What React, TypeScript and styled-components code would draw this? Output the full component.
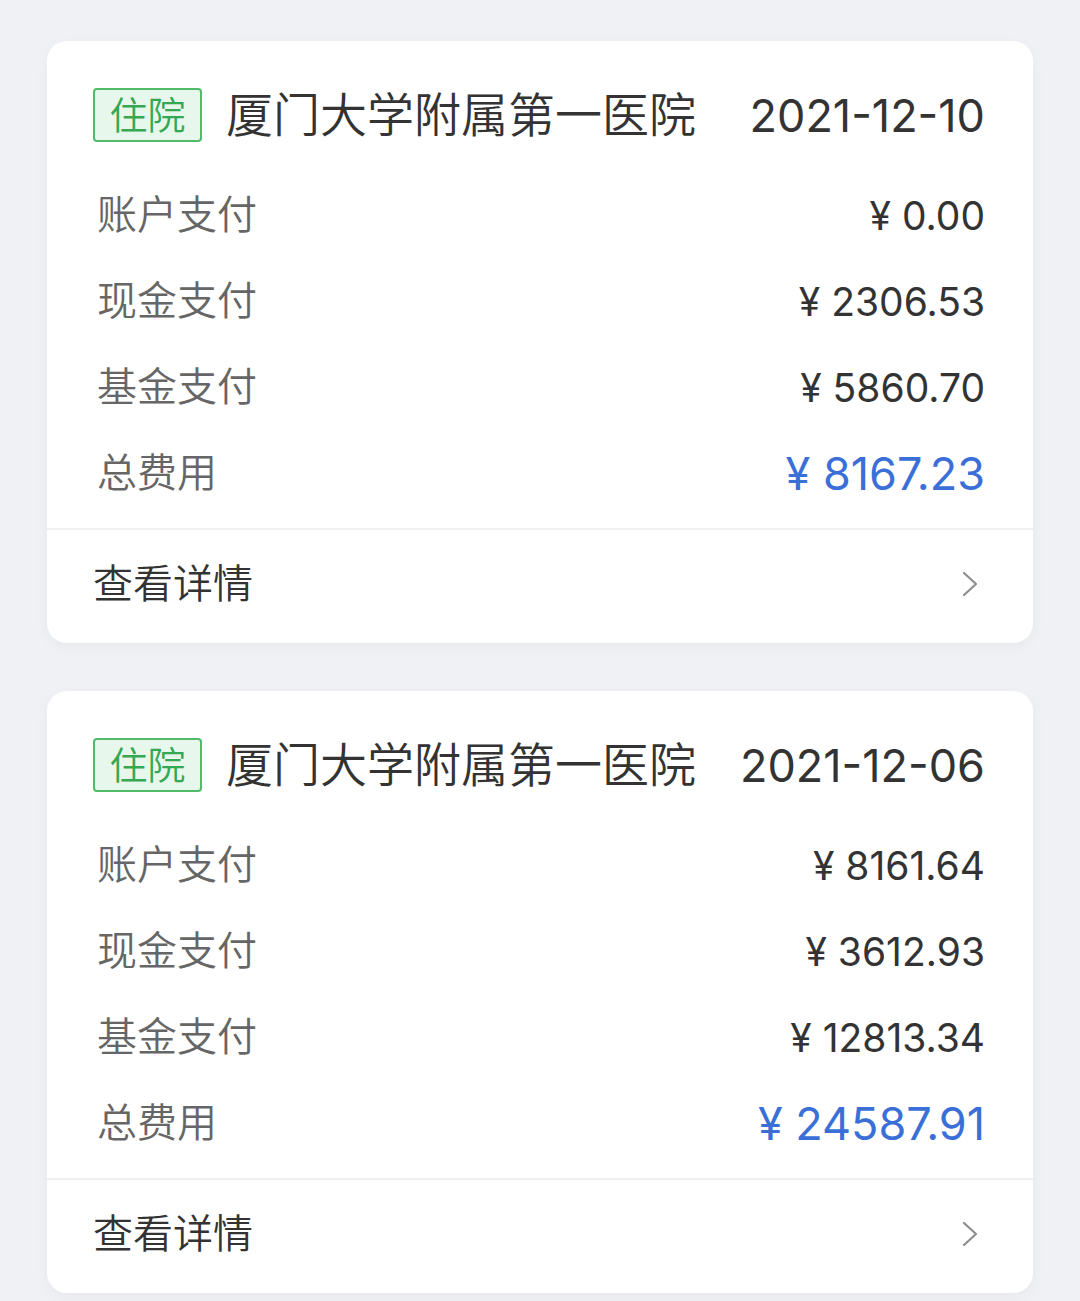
import styled, { createGlobalStyle } from 'styled-components';

const GlobalStyle = createGlobalStyle`
  html, body {
    margin: 0;
    padding: 0;
    background: #f0f1f4;
  }
  body {
    font-family: Inter, "Noto Sans CJK SC", "Noto Sans", sans-serif;
    color: #333;
  }
`;

const Page = styled.div`
  display: flex;
  flex-direction: column;
  gap: 48px;
  padding: 41px 47px 20px;
`;

const Card = styled.div`
  background: #fff;
  border-radius: 20px;
  box-shadow: 0 4px 14px rgba(0, 0, 0, 0.04);
  overflow: hidden;
`;

const Body = styled.div`
  padding: 47px 48px 12px 46px;
`;

const Header = styled.div`
  display: flex;
  align-items: center;
  height: 54px;
  margin-bottom: 30px;
`;

const Tag = styled.span`
  box-sizing: border-box;
  height: 54px;
  width: 109px;
  display: flex;
  align-items: center;
  justify-content: center;
  border: 2px solid #52bb6a;
  border-radius: 4px;
  background: #e8f7ec;
  color: #35a853;
  font-size: 38px;
  font-weight: 350;
  line-height: 1;
`;

const Hospital = styled.span`
  margin-left: 24px;
  font-size: 47px;
  font-weight: 350;
  line-height: 1;
  color: #333;
  white-space: nowrap;
  position: relative;
  top: -1px;
`;

const DateText = styled.span`
  margin-left: auto;
  font-size: 45px;
  line-height: 1;
  color: #333;
  white-space: nowrap;
`;

const Row = styled.div`
  display: flex;
  justify-content: space-between;
  align-items: center;
  height: 86px;
  padding-left: 4px;
`;

const Label = styled.span`
  font-size: 40px;
  font-weight: 350;
  line-height: 1;
  color: #666;
`;

const Amount = styled.span<{ $total?: boolean }>`
  font-size: ${(p) => (p.$total ? '45px' : '39px')};
  line-height: 1;
  color: ${(p) => (p.$total ? '#3b6fd8' : '#333')};
  white-space: nowrap;
`;

const Footer = styled.div`
  display: flex;
  justify-content: space-between;
  align-items: center;
  height: 113px;
  padding: 0 55px 0 46px;
  border-top: 2px solid #f0f0f0;
`;

const FooterText = styled.span`
  font-size: 40px;
  font-weight: 350;
  line-height: 1;
  color: #333;
  position: relative;
  top: -3px;
`;

const ChevronBox = styled.span`
  display: flex;
  margin-bottom: 6px;
`;

const Chevron = () => (
  <ChevronBox>
    <svg width="16" height="26" viewBox="0 0 16 26" fill="none">
      <path d="M2 2 L14 13 L2 24" stroke="#8e8e8e" strokeWidth="2.2" strokeLinecap="round" strokeLinejoin="round" />
    </svg>
  </ChevronBox>
);

type Record = {
  date: string;
  account: string;
  cash: string;
  fund: string;
  total: string;
};

const records: Record[] = [
  { date: '2021-12-10', account: '0.00', cash: '2306.53', fund: '5860.70', total: '8167.23' },
  { date: '2021-12-06', account: '8161.64', cash: '3612.93', fund: '12813.34', total: '24587.91' },
];

const App = () => (
  <>
    <GlobalStyle />
    <Page>
      {records.map((r) => (
        <Card key={r.date}>
          <Body>
            <Header>
              <Tag>住院</Tag>
              <Hospital>厦门大学附属第一医院</Hospital>
              <DateText>{r.date}</DateText>
            </Header>
            <Row>
              <Label>账户支付</Label>
              <Amount>¥ {r.account}</Amount>
            </Row>
            <Row>
              <Label>现金支付</Label>
              <Amount>¥ {r.cash}</Amount>
            </Row>
            <Row>
              <Label>基金支付</Label>
              <Amount>¥ {r.fund}</Amount>
            </Row>
            <Row>
              <Label>总费用</Label>
              <Amount $total>¥ {r.total}</Amount>
            </Row>
          </Body>
          <Footer>
            <FooterText>查看详情</FooterText>
            <Chevron />
          </Footer>
        </Card>
      ))}
    </Page>
  </>
);

export default App;
